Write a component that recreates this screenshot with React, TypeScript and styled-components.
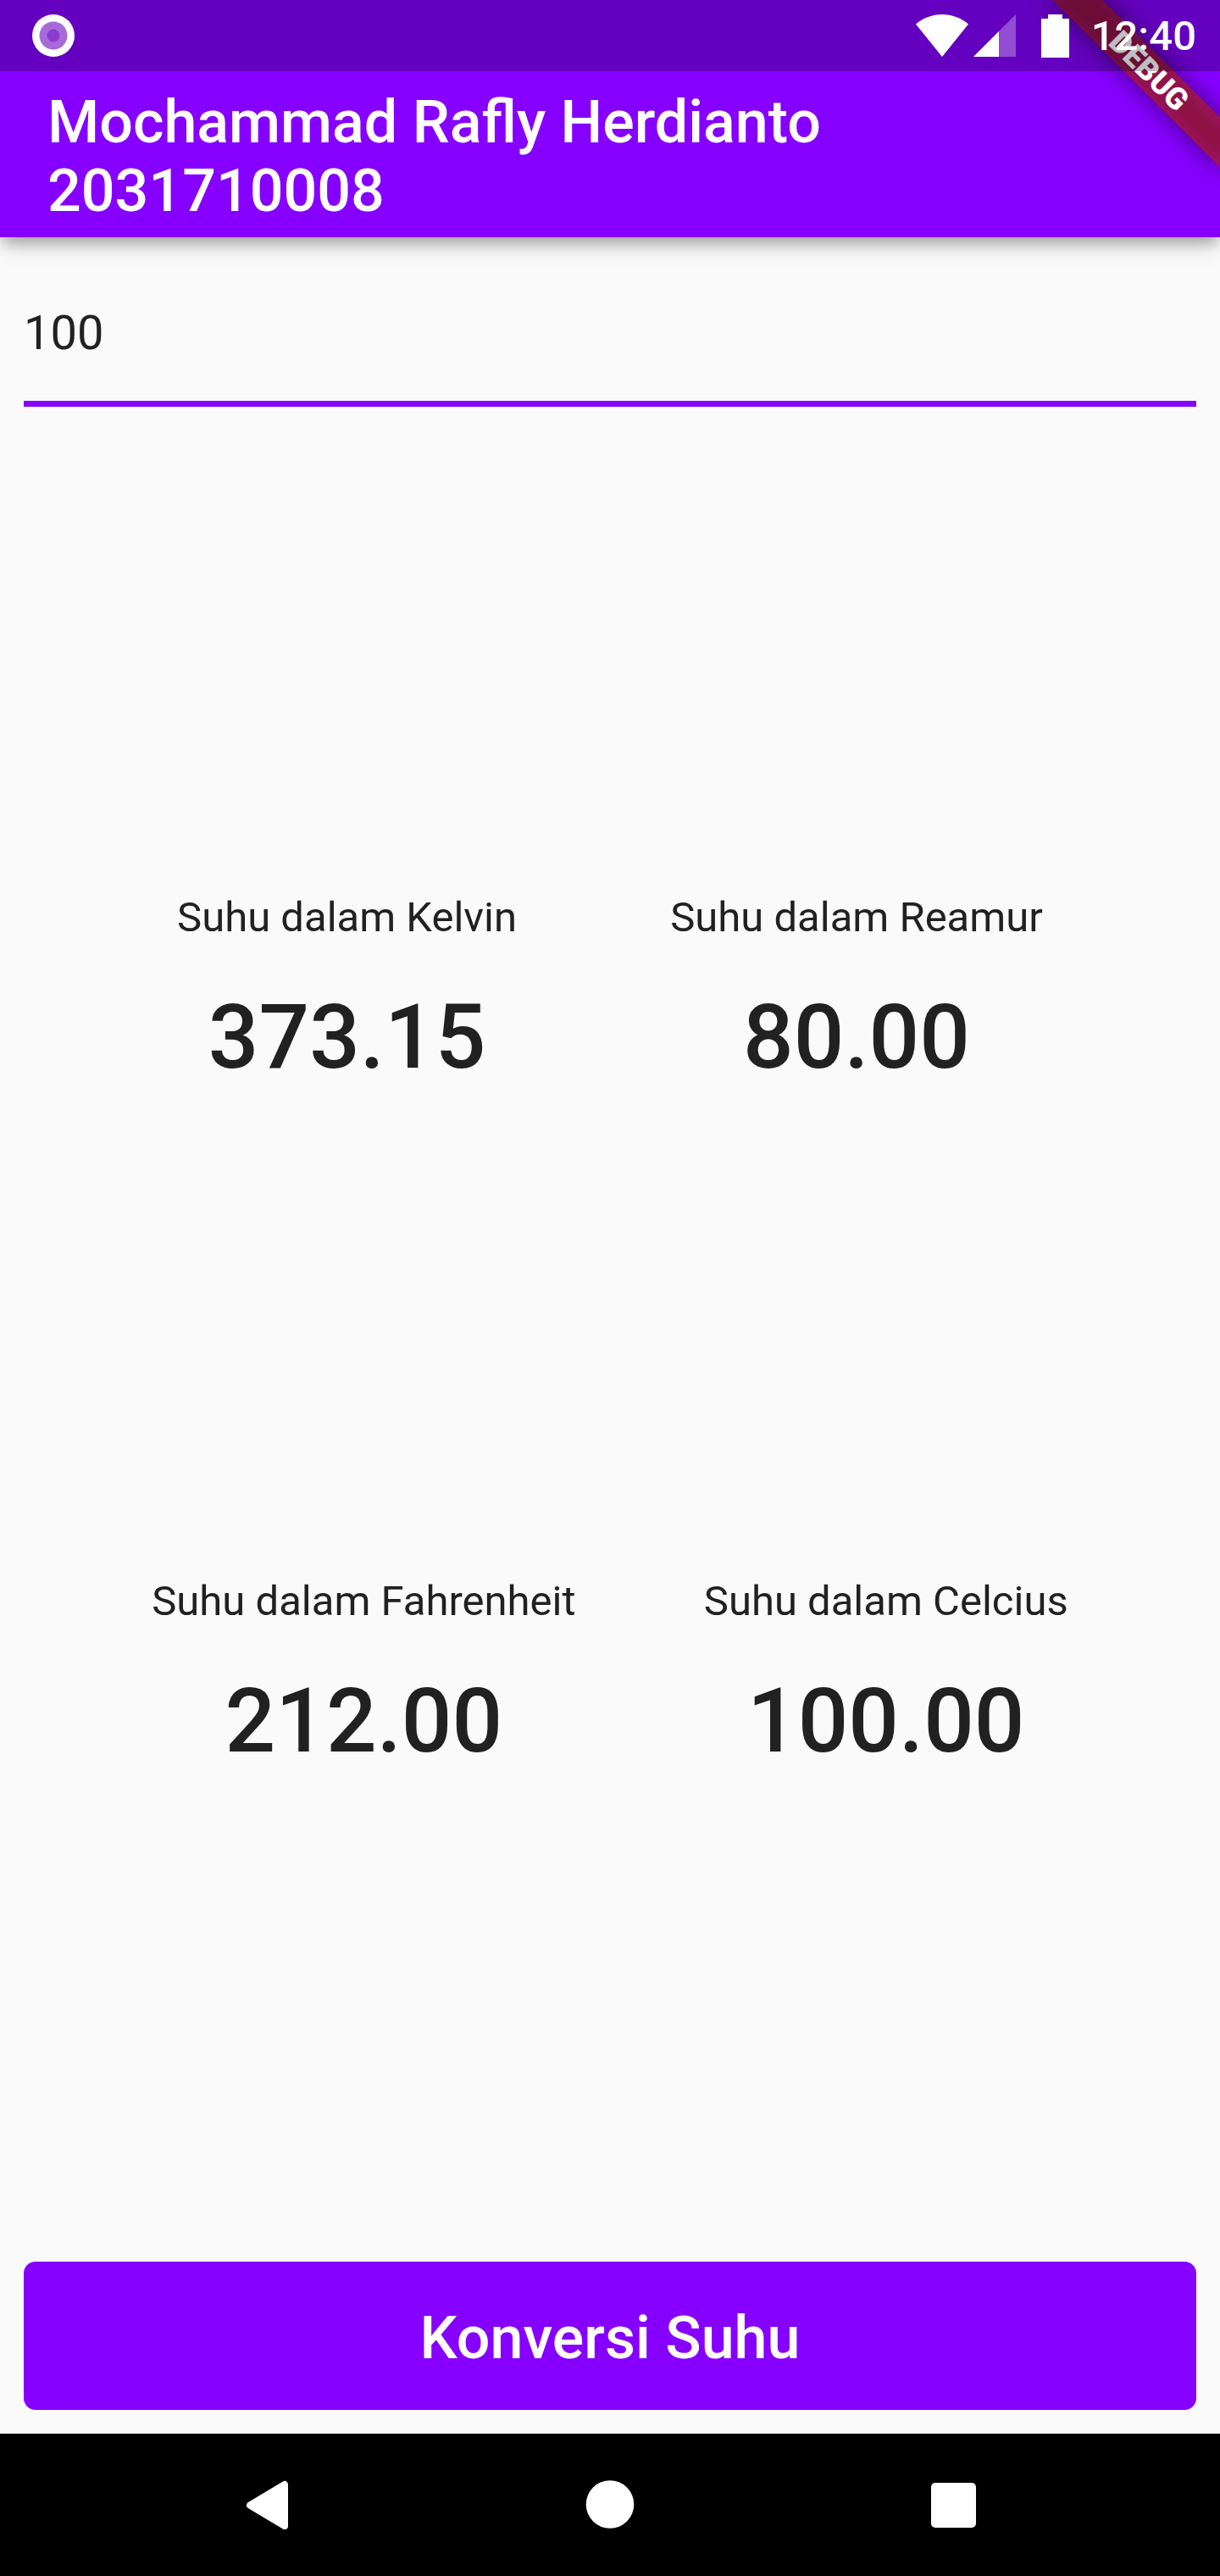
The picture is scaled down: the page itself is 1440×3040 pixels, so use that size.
import React, { useState } from "react";
import styled, { createGlobalStyle } from "styled-components";

const PURPLE = "#8600ff";
const INK = "#212121";

const GlobalStyle = createGlobalStyle`
  * { box-sizing: border-box; }
  body {
    margin: 0;
    background: #fafafa;
    color: ${INK};
    font-family: Roboto, "Liberation Sans", sans-serif;
  }
`;

const Screen = styled.div`
  display: flex;
  flex-direction: column;
  min-height: 100vh;
  overflow: hidden;
`;

const StatusBar = styled.div`
  position: relative;
  z-index: 3;
  display: flex;
  align-items: center;
  justify-content: space-between;
  height: 84px;
  padding: 0 28px 0 38px;
  background: rgba(0, 0, 0, 0.25);
  color: #fff;
`;

const StatusGroup = styled.div`
  display: flex;
  align-items: center;
`;

const StatusIcon = styled.svg<{ $gap?: number }>`
  display: block;
  margin-right: ${(p) => p.$gap ?? 0}px;
`;

const Clock = styled.time`
  padding-top: 2px;
  font-size: 49px;
  font-weight: 500;
  line-height: 58px;
`;

const TopArea = styled.div`
  position: relative;
  z-index: 1;
  background: ${PURPLE};
  box-shadow: 0 12px 14px -4px rgba(0, 0, 0, 0.22), 0 8px 28px rgba(0, 0, 0, 0.16);
`;

const AppBar = styled.header`
  display: flex;
  align-items: center;
  min-height: 196px;
  padding: 6px 56px 0;
`;

const Title = styled.h1`
  margin: 0;
  color: #fff;
  font-size: 70px;
  font-weight: 500;
  line-height: 81px;
`;

const BannerClip = styled.div`
  position: absolute;
  z-index: 2;
  top: 0;
  right: 0;
  width: 320px;
  height: 320px;
  overflow: hidden;
  pointer-events: none;
`;

const Banner = styled.div`
  position: absolute;
  top: 63px;
  right: -56px;
  width: 280px;
  height: 42px;
  transform: rotate(45deg);
  color: #fff;
  font-size: 36px;
  font-weight: 900;
  line-height: 42px;
  text-align: center;

  &::before,
  &::after {
    content: "";
    position: absolute;
    inset: 0;
    z-index: -1;
  }
  &::before {
    background: rgba(0, 0, 0, 0.5);
    filter: blur(14px);
  }
  &::after {
    background: rgba(183, 28, 28, 0.627);
  }
`;

const Form = styled.form`
  display: flex;
  flex: 1;
  flex-direction: column;
  padding: 28px;
`;

const TemperatureInput = styled.input`
  width: 100%;
  padding: 52px 0 47px;
  border: 0;
  border-bottom: 7px solid ${PURPLE};
  border-radius: 0;
  outline: 0;
  background: transparent;
  color: ${INK};
  font: 400 56px/66px Roboto, "Liberation Sans", sans-serif;
  height: 172px;
`;

const Results = styled.section`
  display: flex;
  flex: 1;
  flex-direction: column;
  justify-content: space-evenly;
  padding-bottom: 2px;
`;

const ResultRow = styled.div`
  display: flex;
  justify-content: space-evenly;
`;

const Result = styled.div`
  display: flex;
  flex-direction: column;
  align-items: center;
  gap: 51px;
`;

const ResultLabel = styled.label`
  font-size: 49px;
  line-height: 58px;
`;

const ResultValue = styled.output`
  font-size: 105px;
  font-weight: 500;
  line-height: 123px;
`;

const ConvertButton = styled.button`
  height: 175px;
  padding: 4px 28px 0;
  border: 0;
  border-radius: 14px;
  background: ${PURPLE};
  color: #fff;
  font: 500 70px/82px Roboto, "Liberation Sans", sans-serif;
`;

const NavBar = styled.nav`
  display: flex;
  height: 168px;
  padding: 0 114px;
  background: #000;
`;

const NavButton = styled.button`
  display: flex;
  flex: 1;
  align-items: center;
  justify-content: center;
  padding: 0;
  border: 0;
  background: transparent;
`;

const scales = [
  [
    { id: "kelvin", label: "Suhu dalam Kelvin", from: (c: number) => c + 273.15 },
    { id: "reamur", label: "Suhu dalam Reamur", from: (c: number) => c * 0.8 },
  ],
  [
    { id: "fahrenheit", label: "Suhu dalam Fahrenheit", from: (c: number) => c * 1.8 + 32 },
    { id: "celcius", label: "Suhu dalam Celcius", from: (c: number) => c },
  ],
];

const RecordIcon = () => (
  <StatusIcon width="50" height="50" viewBox="0 0 50 50" aria-hidden="true">
    <circle cx="25" cy="25" r="25" fill="#fff" />
    <circle cx="25" cy="25" r="16.5" fill="#a76bd9" />
    <circle cx="25" cy="25" r="7.5" fill="#8a3dcd" />
  </StatusIcon>
);

const WifiIcon = () => (
  <StatusIcon $gap={6} width="62" height="50" viewBox="0 0 62 50" aria-hidden="true">
    <path d="M31 50 0 11.500C9 4 19.500 0 31 0s22 4 31 11.500Z" fill="#fff" />
  </StatusIcon>
);

const SignalIcon = () => (
  <StatusIcon $gap={30} width="50" height="50" viewBox="0 0 50 50" aria-hidden="true">
    <path d="M0 50 50 0V50Z" fill="#fff" fillOpacity="0.3" />
    <path d="M0 50 30 20V50Z" fill="#fff" />
  </StatusIcon>
);

const BatteryIcon = () => (
  <StatusIcon $gap={26} width="33" height="51" viewBox="0 0 33 51" aria-hidden="true">
    <path d="M8 0H25V5H33V51H0V5H8Z" fill="#fff" />
  </StatusIcon>
);

export default function App() {
  const [text, setText] = useState("100");
  const [celsius, setCelsius] = useState(100);

  const convert = (event: React.FormEvent) => {
    event.preventDefault();
    setCelsius(Number(text) || 0);
  };

  return (
    <>
      <GlobalStyle />
      <Screen>
        <TopArea>
          <StatusBar>
            <RecordIcon />
            <StatusGroup>
              <WifiIcon />
              <SignalIcon />
              <BatteryIcon />
              <Clock>12:40</Clock>
            </StatusGroup>
          </StatusBar>
          <AppBar>
            <Title>
              Mochammad Rafly Herdianto
              <br />
              2031710008
            </Title>
          </AppBar>
          <BannerClip>
            <Banner>DEBUG</Banner>
          </BannerClip>
        </TopArea>
        <Form onSubmit={convert}>
          <TemperatureInput
            aria-label="Suhu"
            inputMode="decimal"
            value={text}
            onChange={(event) => setText(event.target.value)}
          />
          <Results>
            {scales.map((row) => (
              <ResultRow key={row[0].id}>
                {row.map((scale) => (
                  <Result key={scale.id}>
                    <ResultLabel htmlFor={scale.id}>{scale.label}</ResultLabel>
                    <ResultValue id={scale.id}>{scale.from(celsius).toFixed(2)}</ResultValue>
                  </Result>
                ))}
              </ResultRow>
            ))}
          </Results>
          <ConvertButton type="submit">Konversi Suhu</ConvertButton>
        </Form>
        <NavBar>
          <NavButton type="button" aria-label="Back">
            <svg width="84" height="84" viewBox="0 0 84 84" aria-hidden="true">
              <path
                d="M21 42.500 62 18V67Z"
                fill="#fff"
                stroke="#fff"
                strokeWidth="8"
                strokeLinejoin="round"
              />
            </svg>
          </NavButton>
          <NavButton type="button" aria-label="Home">
            <svg width="84" height="84" viewBox="0 0 84 84" aria-hidden="true">
              <circle cx="42" cy="41.500" r="28.300" fill="#fff" />
            </svg>
          </NavButton>
          <NavButton type="button" aria-label="Recent apps">
            <svg width="84" height="84" viewBox="0 0 84 84" aria-hidden="true">
              <rect x="17" y="16" width="53" height="53" rx="5" fill="#fff" />
            </svg>
          </NavButton>
        </NavBar>
      </Screen>
    </>
  );
}
